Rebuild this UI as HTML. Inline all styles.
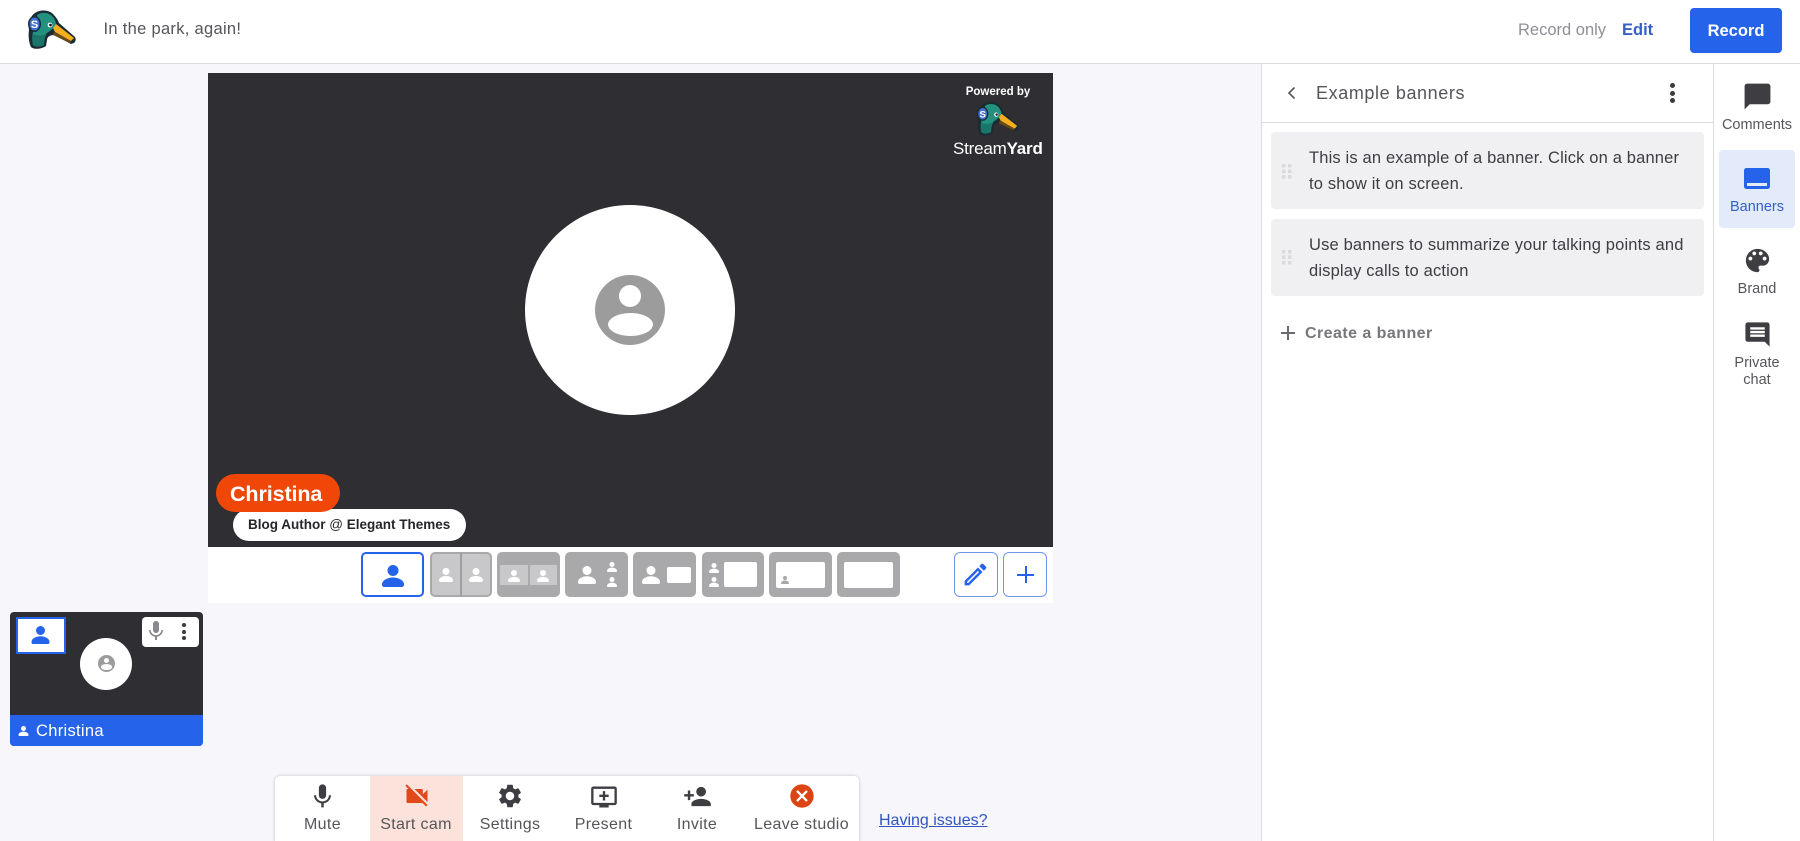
<!DOCTYPE html>
<html><head><meta charset="utf-8"><title>Studio</title>
<style>
html,body{margin:0;padding:0;background:#f6f6fb;width:1800px;height:841px;overflow:hidden}
#root{position:relative;width:1800px;height:841px;overflow:hidden;font-family:"Liberation Sans",sans-serif;color:#45454a}
.a{position:absolute}
.t{position:absolute;white-space:nowrap;line-height:1}
.c{text-align:center;transform:translateX(-50%)}
svg{display:block;position:absolute;overflow:visible}
.lb{position:absolute;top:552px;height:45px;background:#a9a9ab;border-radius:5px}
.w{position:absolute;background:#fff;border-radius:2px}
.l{position:absolute;white-space:nowrap;line-height:1;top:817px;font-size:16px;letter-spacing:.35px;color:#55555a;text-align:center;transform:translateX(-50%)}
.s{position:absolute;white-space:nowrap;line-height:1;font-size:14.5px;color:#55555a;text-align:center;transform:translateX(-50%)}
.b{position:absolute;white-space:nowrap;line-height:1;left:1309px;font-size:16.5px;letter-spacing:.16px;color:#3d3d42}
</style></head><body>
<div id="root">
<svg width="0" height="0" style="position:absolute">
<defs>
<symbol id="p" viewBox="0 0 22 22"><circle cx="11" cy="5.5" r="5.5"/><path d="M0 19.5C0 15 6 12.5 11 12.5S22 15 22 19.5C22 21.5 21 22 19 22H3C1 22 0 21.5 0 19.5Z"/></symbol>
<symbol id="mic" viewBox="0 0 24 24"><path d="M12 14c1.66 0 2.99-1.34 2.99-3L15 5c0-1.66-1.34-3-3-3S9 3.34 9 5v6c0 1.66 1.34 3 3 3zm5.3-3c0 3-2.54 5.1-5.3 5.1S6.7 14 6.7 11H5c0 3.41 2.72 6.23 6 6.72V21h2v-3.28c3.28-.48 6-3.3 6-6.72h-1.7z"/></symbol>
<symbol id="duck" viewBox="0 0 48 40">
<path d="M7 3C11 0 20-1 25 4C28 7 30 10 31 13L47 27C48 29 48 31 46 33L43 34L26 25C22 25 19 27 19 30L18 36C14 39 6 40 3 37C1 33 0 26 1 20C0 14 2 6 7 3Z" fill="#1a2b33"/>
<path d="M9 5C13 2 20 2 24 6C27 9 28 12 28 15C26 18 22 21 19 23C17 26 16 30 16 35C12 37 7 37 5 35C4 30 4 26 5 22C9 20 10 12 9 5Z" fill="#22917f"/>
<path d="M5 24C9 26 14 26 18 24C16.5 27 16 31 16 35C12 37 7 37 5 35C4 31 4 27 5 24Z" fill="#1b7468"/>
<path d="M28 14L46 28L43 31L27 22L25 18Z" fill="#f4ae1e"/>
<path d="M26 22L43 31L42 33L25 25Z" fill="#6a4a18"/>
<ellipse cx="6.5" cy="14" rx="6.5" ry="8" fill="#1a2b33"/><ellipse cx="6.5" cy="14" rx="5" ry="6.5" fill="#3f6fd8"/>
<text x="6.5" y="18" font-size="11" font-weight="700" fill="#fff" text-anchor="middle" font-family="Liberation Sans">S</text>
<circle cx="22" cy="15" r="2.4" fill="#fff"/><circle cx="22.5" cy="15" r="1.4" fill="#13202a"/>
</symbol>
</defs></svg>

<!-- header -->
<div class="a" style="left:0;top:0;width:1800px;height:63px;background:#fff;border-bottom:1px solid #dcdcde"></div>
<svg style="left:28px;top:10px" width="48" height="40"><use href="#duck" width="48" height="40"/></svg>
<div class="t" style="left:103.5px;top:21px;font-size:16.5px;letter-spacing:.3px;color:#55555a">In the park, again!</div>
<div class="t" style="left:1518px;top:22px;font-size:16.5px;color:#8f8f96">Record only</div>
<div class="t" style="left:1622px;top:22px;font-size:16.5px;font-weight:700;color:#3560c8">Edit</div>
<div class="a" style="left:1690px;top:8px;width:92px;height:45px;background:#2563eb;border-radius:4px"></div>
<div class="t c" style="left:1736px;top:23px;font-size:16.5px;font-weight:700;color:#fff">Record</div>

<!-- stage -->
<div class="a" style="left:208px;top:73px;width:845px;height:474px;background:#2e2e33"></div>
<div class="a" style="left:208px;top:547px;width:845px;height:56px;background:#fff"></div>
<div class="a" style="left:525px;top:205px;width:210px;height:210px;border-radius:50%;background:#fff"></div>
<div class="a" style="left:595px;top:275px;width:70px;height:70px;border-radius:50%;background:#9c9c9c"></div>
<div class="a" style="left:619px;top:285px;width:22px;height:22px;border-radius:50%;background:#fff"></div>
<div class="a" style="left:608px;top:313px;width:45px;height:23px;border-radius:50%;background:#fff"></div>
<div class="t c" style="left:998px;top:87px;font-size:11.5px;font-weight:700;color:#fff">Powered by</div>
<svg style="left:977px;top:101px" width="42" height="36"><use href="#duck" width="42" height="36"/></svg>
<div class="t" style="left:953px;top:140px;font-size:17px;color:#fff;letter-spacing:-.2px">Stream<b>Yard</b></div>
<div class="a" style="left:233px;top:509px;width:233px;height:32px;background:#fff;border-radius:16px"></div>
<div class="a" style="left:216px;top:474px;width:124px;height:38px;background:#f04708;border-radius:19px"></div>
<div class="t" style="left:230px;top:484px;font-size:21.5px;font-weight:700;color:#fff;letter-spacing:-.1px">Christina</div>
<div class="t" style="left:248px;top:518px;font-size:13.5px;font-weight:700;color:#26262a">Blog Author <span style="font-weight:400">@</span> Elegant Themes</div>

<!-- layouts -->
<div class="a" style="left:361px;top:552px;width:59px;height:41px;border:2px solid #2563eb;border-radius:5px;background:#fff"></div>
<svg style="left:381.5px;top:564.500px;fill:#2563eb" width="22" height="22"><use href="#p" width="22" height="22"/></svg>

<div class="lb" style="left:430px;width:62px;background:#c8c8ca;box-sizing:border-box;border:2px solid #a9a9ab"></div>
<div class="a" style="left:460px;top:552px;width:2px;height:45px;background:#a0a0a2"></div>
<svg style="left:439px;top:568px;fill:#fff" width="14" height="14"><use href="#p" width="14" height="14"/></svg>
<svg style="left:469px;top:568px;fill:#fff" width="14" height="14"><use href="#p" width="14" height="14"/></svg>

<div class="lb" style="left:497px;width:63px"></div>
<div class="a" style="left:500px;top:565px;width:28px;height:20px;background:#c8c8ca"></div>
<div class="a" style="left:530px;top:565px;width:27px;height:20px;background:#c8c8ca"></div>
<svg style="left:508px;top:570px;fill:#fff" width="12" height="12"><use href="#p" width="12" height="12"/></svg>
<svg style="left:537px;top:570px;fill:#fff" width="12" height="12"><use href="#p" width="12" height="12"/></svg>

<div class="lb" style="left:565px;width:63px"></div>
<svg style="left:578px;top:566px;fill:#fff" width="18" height="18"><use href="#p" width="18" height="18"/></svg>
<svg style="left:607px;top:562px;fill:#fff" width="10" height="10"><use href="#p" width="10" height="10"/></svg>
<svg style="left:607px;top:577px;fill:#fff" width="10" height="10"><use href="#p" width="10" height="10"/></svg>

<div class="lb" style="left:633px;width:63px"></div>
<svg style="left:642px;top:566px;fill:#fff" width="18" height="18"><use href="#p" width="18" height="18"/></svg>
<div class="w" style="left:667px;top:567px;width:24px;height:16px"></div>

<div class="lb" style="left:702px;width:62px"></div>
<svg style="left:709px;top:563px;fill:#fff" width="10" height="10"><use href="#p" width="10" height="10"/></svg>
<svg style="left:709px;top:577px;fill:#fff" width="10" height="10"><use href="#p" width="10" height="10"/></svg>
<div class="w" style="left:724px;top:562px;width:33px;height:25px"></div>

<div class="lb" style="left:769px;width:63px"></div>
<div class="w" style="left:776px;top:562px;width:49px;height:26px"></div>
<svg style="left:781px;top:576px;fill:#a9a9ab" width="8" height="8"><use href="#p" width="8" height="8"/></svg>

<div class="lb" style="left:837px;width:63px"></div>
<div class="w" style="left:844px;top:562px;width:49px;height:26px"></div>

<div class="a" style="left:954px;top:552px;width:41.5px;height:42.5px;border:1.5px solid #6f95ea;border-radius:6px;background:#fff"></div>
<svg style="left:961px;top:560px;fill:#2563eb" width="29" height="29" viewBox="0 0 24 24"><path d="M3 17.25V21h3.75L17.81 9.94l-3.75-3.75L3 17.25zM5.92 19H5v-.92l9.06-9.06.92.92L5.92 19zM20.71 7.04c.39-.39.39-1.02 0-1.41l-2.34-2.34c-.2-.2-.45-.29-.71-.29s-.51.1-.7.29l-1.83 1.83 3.75 3.75 1.83-1.83z"/></svg>
<div class="a" style="left:1003px;top:552px;width:42px;height:42.5px;border:1.5px solid #6f95ea;border-radius:6px;background:#fff"></div>
<div class="a" style="left:1017px;top:573.5px;width:17px;height:2px;background:#2563eb"></div>
<div class="a" style="left:1024.5px;top:566px;width:2px;height:17px;background:#2563eb"></div>

<!-- thumbnail -->
<div class="a" style="left:10px;top:612px;width:193px;height:134px;background:#2e2e33;border-radius:4px;overflow:hidden">
  <div class="a" style="left:0;top:103px;width:193px;height:31px;background:#2563eb"></div>
</div>
<div class="a" style="left:16px;top:617px;width:46px;height:33px;background:#fff;border:2px solid #2563eb"></div>
<svg style="left:31px;top:626px;fill:#2563eb" width="19" height="18"><use href="#p" width="19" height="18"/></svg>
<div class="a" style="left:142px;top:617px;width:57px;height:30px;background:#fff;border-radius:4px"></div>
<svg style="left:144px;top:619px;fill:#8a8a8e" width="24" height="24"><use href="#mic" width="24" height="24"/></svg>
<div class="a" style="left:182px;top:623px;width:4px;height:4px;border-radius:50%;background:#3a3a3f"></div>
<div class="a" style="left:182px;top:629.5px;width:4px;height:4px;border-radius:50%;background:#3a3a3f"></div>
<div class="a" style="left:182px;top:636px;width:4px;height:4px;border-radius:50%;background:#3a3a3f"></div>
<div class="a" style="left:80px;top:638px;width:52px;height:52px;border-radius:50%;background:#fff"></div>
<div class="a" style="left:98px;top:655px;width:17px;height:17px;border-radius:50%;background:#9c9c9c"></div>
<div class="a" style="left:104px;top:657.5px;width:5px;height:5px;border-radius:50%;background:#fff"></div>
<div class="a" style="left:101px;top:664px;width:11px;height:5.5px;border-radius:50%;background:#fff"></div>
<svg style="left:18px;top:726px;fill:#fff" width="11" height="10"><use href="#p" width="11" height="10"/></svg>
<div class="t" style="left:36px;top:723px;font-size:16.5px;letter-spacing:.3px;color:#fff">Christina</div>

<!-- toolbar -->
<div class="a" style="left:275px;top:776px;width:584px;height:70px;background:#fff;border-radius:5px;box-shadow:0 0 3px rgba(0,0,0,.22)"></div>
<div class="a" style="left:370px;top:776px;width:93px;height:65px;background:#fbe2da"></div>
<svg style="left:308px;top:781.5px;fill:#3d3d42" width="29" height="29"><use href="#mic" width="29" height="29"/></svg>
<svg style="left:402.5px;top:782px;fill:#e2491a" width="28" height="28" viewBox="0 0 24 24"><path d="M21 6.5l-4 4V7c0-.55-.45-1-1-1H9.82L21 17.18V6.5zM3.27 2L2 3.27 4.73 6H4c-.55 0-1 .45-1 1v10c0 .55.45 1 1 1h12c.21 0 .39-.08.54-.18L19.73 21 21 19.73 3.27 2z"/></svg>
<svg style="left:496px;top:781.5px;fill:#3d3d42" width="28" height="28" viewBox="0 0 24 24"><path d="M19.14 12.94c.04-.3.06-.61.06-.94 0-.32-.02-.64-.07-.94l2.03-1.58c.18-.14.23-.41.12-.61l-1.92-3.32c-.12-.22-.37-.29-.59-.22l-2.39.96c-.5-.38-1.03-.7-1.62-.94l-.36-2.54c-.04-.24-.24-.41-.48-.41h-3.84c-.24 0-.43.17-.47.41l-.36 2.54c-.59.24-1.13.57-1.62.94l-2.39-.96c-.22-.08-.47 0-.59.22L2.74 8.87c-.12.21-.08.47.12.61l2.03 1.58c-.05.3-.09.63-.09.94s.02.64.07.94l-2.03 1.58c-.18.14-.23.41-.12.61l1.92 3.32c.12.22.37.29.59.22l2.39-.96c.5.38 1.03.7 1.62.94l.36 2.54c.05.24.24.41.48.41h3.84c.24 0 .44-.17.47-.41l.36-2.54c.59-.24 1.13-.56 1.62-.94l2.39.96c.22.08.47 0 .59-.22l1.92-3.32c.12-.22.07-.47-.12-.61l-2.01-1.58zM12 15.6c-1.98 0-3.6-1.62-3.6-3.6s1.62-3.6 3.6-3.6 3.6 1.62 3.6 3.6-1.62 3.6-3.6 3.6z"/></svg>
<svg style="left:589.5px;top:782.5px;fill:#3d3d42" width="28" height="28" viewBox="0 0 24 24"><path d="M21 3H3c-1.11 0-2 .89-2 2v12c0 1.1.89 2 2 2h5v2h8v-2h5c1.1 0 1.99-.9 1.99-2L23 5c0-1.11-.9-2-2-2zm0 14H3V5h18v12zm-5-7v2h-3v3h-2v-3H8v-2h3V7h2v3h3z"/></svg>
<svg style="left:683px;top:782px;fill:#3d3d42" width="29" height="29" viewBox="0 0 24 24"><path d="M15 12c2.21 0 4-1.79 4-4s-1.79-4-4-4-4 1.79-4 4 1.79 4 4 4zm-9-2V7H4v3H1v2h3v3h2v-3h3v-2H6zm9 4c-2.67 0-8 1.34-8 4v2h16v-2c0-2.66-5.33-4-8-4z"/></svg>
<svg style="left:788px;top:782px;fill:#dc4414" width="28" height="28" viewBox="0 0 24 24"><path d="M12 2C6.47 2 2 6.47 2 12s4.47 10 10 10 10-4.47 10-10S17.53 2 12 2zm5 13.59L15.59 17 12 13.41 8.41 17 7 15.59 10.59 12 7 8.41 8.41 7 12 10.59 15.59 7 17 8.41 13.41 12 17 15.59z"/></svg>
<div class="l" style="left:322.5px">Mute</div>
<div class="l" style="left:416px">Start cam</div>
<div class="l" style="left:510px">Settings</div>
<div class="l" style="left:603.5px">Present</div>
<div class="l" style="left:697px">Invite</div>
<div class="l" style="left:801.5px">Leave studio</div>
<div class="t" style="left:879px;top:813px;font-size:16px;color:#2f55c0;text-decoration:underline">Having issues?</div>

<!-- right panel -->
<div class="a" style="left:1261px;top:64px;width:451px;height:777px;background:#fff;border-left:1px solid #dcdcde;border-right:1px solid #dcdcde"></div>
<div class="a" style="left:1714px;top:64px;width:86px;height:777px;background:#fff"></div>
<div class="a" style="left:1262px;top:122px;width:451px;height:1px;background:#dcdcde"></div>
<svg style="left:1285px;top:85px" width="12" height="16" fill="none" stroke="#55555a" stroke-width="1.6"><path d="M9.5 2.5L4 8L9.5 13.5"/></svg>
<div class="t" style="left:1316px;top:84px;font-size:18px;letter-spacing:.6px;color:#55555a">Example banners</div>
<div class="a" style="left:1670px;top:83px;width:5px;height:5px;border-radius:50%;background:#3a3a3f"></div>
<div class="a" style="left:1670px;top:90.5px;width:5px;height:5px;border-radius:50%;background:#3a3a3f"></div>
<div class="a" style="left:1670px;top:98px;width:5px;height:5px;border-radius:50%;background:#3a3a3f"></div>

<div class="a" style="left:1271px;top:132px;width:433px;height:77px;background:#f0f0f3;border-radius:4px"></div>
<div class="a" style="left:1271px;top:219px;width:433px;height:77px;background:#f0f0f3;border-radius:4px"></div>
<svg style="left:1282px;top:164px;fill:#dadade" width="10" height="15"><rect width="3.5" height="3.5"/><rect x="6" width="3.5" height="3.5"/><rect y="5.5" width="3.5" height="3.5"/><rect x="6" y="5.5" width="3.5" height="3.5"/><rect y="11" width="3.5" height="3.5"/><rect x="6" y="11" width="3.5" height="3.5"/></svg>
<svg style="left:1282px;top:250px;fill:#dadade" width="10" height="15"><rect width="3.5" height="3.5"/><rect x="6" width="3.5" height="3.5"/><rect y="5.5" width="3.5" height="3.5"/><rect x="6" y="5.5" width="3.5" height="3.5"/><rect y="11" width="3.5" height="3.5"/><rect x="6" y="11" width="3.5" height="3.5"/></svg>
<div class="b" style="top:150px">This is an example of a banner. Click on a banner</div>
<div class="b" style="top:176px">to show it on screen.</div>
<div class="b" style="top:237px">Use banners to summarize your talking points and</div>
<div class="b" style="top:263px">display calls to action</div>
<div class="a" style="left:1281px;top:332px;width:14px;height:2px;background:#6a6a70"></div>
<div class="a" style="left:1287px;top:326px;width:2px;height:14px;background:#6a6a70"></div>
<div class="t" style="left:1305px;top:326px;font-size:16px;font-weight:700;letter-spacing:.45px;color:#77777c">Create a banner</div>

<!-- sidebar -->
<div class="a" style="left:1719px;top:150px;width:76px;height:78px;background:#e3ebfb;border-radius:4px"></div>
<svg style="left:1741.5px;top:81px;fill:#3d3d42" width="31" height="31" viewBox="0 0 24 24"><path d="M20 2H4c-1.1 0-2 .9-2 2v18l4-4h14c1.1 0 2-.9 2-2V4c0-1.1-.9-2-2-2z"/></svg>
<div class="s" style="left:1757px;top:118px">Comments</div>
<svg style="left:1744px;top:168px" width="26" height="21" viewBox="0 0 26 21"><rect width="26" height="21" rx="2.5" fill="#2563eb"/><rect x="3" y="15" width="20" height="3" fill="#e3ebfb"/></svg>
<div class="s" style="left:1757px;top:200px;color:#3560c8">Banners</div>
<svg style="left:1741.5px;top:245px;fill:#3d3d42" width="31" height="31" viewBox="0 0 24 24"><path d="M12 3c-4.97 0-9 4.03-9 9s4.03 9 9 9c.83 0 1.5-.67 1.5-1.5 0-.39-.15-.74-.39-1.01-.23-.26-.38-.61-.38-.99 0-.83.67-1.5 1.5-1.5H16c2.76 0 5-2.24 5-5 0-4.42-4.03-8-9-8zm-5.5 9c-.83 0-1.5-.67-1.5-1.5S5.67 9 6.5 9 8 9.67 8 10.5 7.33 12 6.5 12zm3-4C8.67 8 8 7.33 8 6.5S8.67 5 9.5 5s1.5.67 1.5 1.5S10.33 8 9.5 8zm5 0c-.83 0-1.5-.67-1.5-1.5S13.67 5 14.5 5s1.5.67 1.5 1.5S15.33 8 14.5 8zm3 4c-.83 0-1.5-.67-1.5-1.5S16.67 9 17.5 9s1.5.67 1.5 1.5-.67 1.5-1.5 1.5z"/></svg>
<div class="s" style="left:1757px;top:282px">Brand</div>
<svg style="left:1742.5px;top:319.5px;fill:#3d3d42" width="29" height="29" viewBox="0 0 24 24"><path d="M21.99 4c0-1.1-.89-2-1.99-2H4c-1.1 0-2 .9-2 2v12c0 1.1.9 2 2 2h14l4 4-.01-18zM18 14H6v-2h12v2zm0-3H6V9h12v2zm0-3H6V6h12v2z"/></svg>
<div class="s" style="left:1757px;top:356px">Private</div>
<div class="s" style="left:1757px;top:373px">chat</div>
</div>
</body></html>
